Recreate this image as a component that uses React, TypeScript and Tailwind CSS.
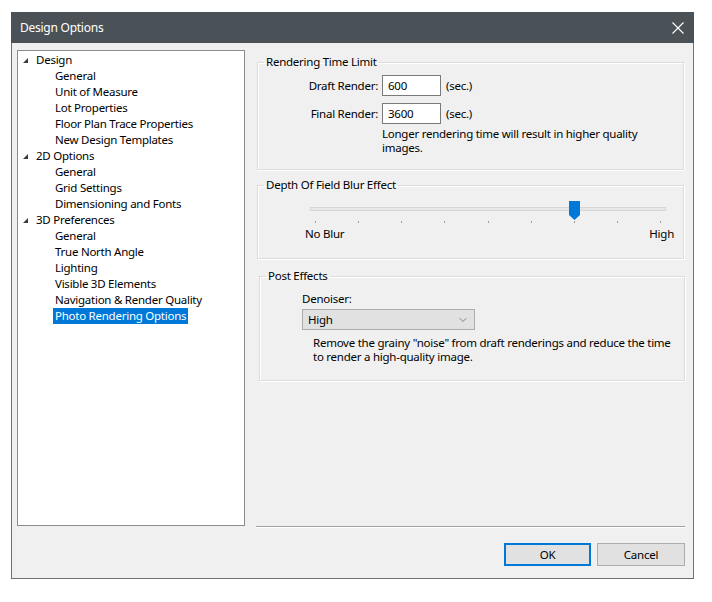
import { ChevronDown } from "lucide-react"

const tree = [
  {
    label: "Design",
    children: ["General", "Unit of Measure", "Lot Properties", "Floor Plan Trace Properties", "New Design Templates"],
  },
  { label: "2D Options", children: ["General", "Grid Settings", "Dimensioning and Fonts"] },
  {
    label: "3D Preferences",
    children: [
      "General",
      "True North Angle",
      "Lighting",
      "Visible 3D Elements",
      "Navigation & Render Quality",
      "Photo Rendering Options",
    ],
  },
]

const selected = "Photo Rendering Options"

function Expander() {
  return (
    <svg width="5" height="5" viewBox="0 0 5 5" className="block">
      <polygon points="5,0 5,5 0,5" fill="#3c3c3c" />
    </svg>
  )
}

function GroupBox({ title, className, children }: { title: string; className: string; children: React.ReactNode }) {
  return (
    <fieldset className={`border border-[#dcdcdc] shadow-[inset_1px_1px_0_#fff,1px_1px_0_#fff] ${className}`}>
      <legend className="ml-[6px] px-[2px] leading-4">{title}</legend>
      {children}
    </fieldset>
  )
}

export default function App() {
  const ticks = Array.from({ length: 9 })

  return (
    <div className="h-[602px] w-[712px] overflow-hidden bg-white pl-[11px] pt-[12px] font-['Noto_Sans',sans-serif] text-[11.5px] tracking-[-0.25px] text-black">
      <div className="w-[683px]">
        {/* Title bar */}
        <div className="flex h-[31px] items-center justify-between bg-[#4a5257] pl-[9px] pr-[10px]">
          <span className="text-[12px] text-white">Design Options</span>
          <svg width="12" height="12" viewBox="0 0 12 12">
            <path d="M0.5 0.5 L11.5 11.5 M11.5 0.5 L0.5 11.5" stroke="#fff" strokeWidth="1.1" />
          </svg>
        </div>

        {/* Body */}
        <div className="border-x border-b border-[#707070] bg-[#f0f0f0] pb-[12px] pl-[5px] pr-[7px] pt-[7px]">
          <div className="flex h-[478px]">
            {/* Tree */}
            <div className="h-[476px] w-[228px] border border-[#8c8c8c] bg-white pt-[1px]">
              {tree.map((node) => (
                <div key={node.label}>
                  <div className="flex h-4 items-center">
                    <span className="flex w-[18px] pl-[5px] pt-[1px]">
                      <Expander />
                    </span>
                    <span>{node.label}</span>
                  </div>
                  {node.children.map((child) => (
                    <div key={child} className="flex h-4 items-center pl-[35px]">
                      <span
                        className={`px-[2px] leading-4 ${child === selected ? "bg-[#0078d7] text-white" : ""}`}
                      >
                        {child}
                      </span>
                    </div>
                  ))}
                </div>
              ))}
            </div>

            {/* Options */}
            <div className="ml-[11px] flex w-[429px] flex-col">
              <GroupBox title="Rendering Time Limit" className="ml-[1px] mt-[4px] w-[427px] pb-[14px]">
                <div className="mt-[5px] flex items-center">
                  <span className="w-[124px] pr-[4px] text-right">Draft Render:</span>
                  <input
                    readOnly
                    value="600"
                    className="h-[21px] w-[59px] border border-[#7a7a7a] bg-white pl-[5px] outline-none"
                  />
                  <span className="ml-[5px]">(sec.)</span>
                </div>
                <div className="mt-[7px] flex items-center">
                  <span className="w-[124px] pr-[4px] text-right">Final Render:</span>
                  <input
                    readOnly
                    value="3600"
                    className="h-[21px] w-[59px] border border-[#7a7a7a] bg-white pl-[5px] outline-none"
                  />
                  <span className="ml-[5px]">(sec.)</span>
                </div>
                <p className="mt-[3px] whitespace-nowrap pl-[124px] leading-[14px]">
                  Longer rendering time will result in higher quality
                  <br />
                  images.
                </p>
              </GroupBox>

              <GroupBox title="Depth Of Field Blur Effect" className="ml-[1px] mt-[7px] w-[427px] pb-[16px]">
                {/* Slider */}
                <div className="relative ml-[52px] mt-[8px] h-[19px] w-[356px] pt-[6px]">
                  <div className="h-[4px] border border-[#d6d6d6] bg-[#e7e7e7]" />
                  <svg width="11" height="19" viewBox="0 0 11 19" className="absolute left-[259px] top-0">
                    <path d="M0 0 H11 V14 L5.5 19 L0 14 Z" fill="#0078d7" />
                  </svg>
                </div>
                <div className="ml-[52px] mt-[1px] flex h-[2px] w-[356px] justify-between px-[5px]">
                  {ticks.map((_, i) => (
                    <span key={i} className="h-[2px] w-px bg-[#a0a0a0]" />
                  ))}
                </div>
                <div className="ml-[47px] mt-[3px] flex w-[369px] justify-between leading-4">
                  <span>No Blur</span>
                  <span>High</span>
                </div>
              </GroupBox>

              <GroupBox title="Post Effects" className="ml-[3px] mt-[9px] w-[426px] pb-[16px]">
                <div className="mt-[7px] pl-[42px] leading-4">Denoiser:</div>
                <div className="ml-[42px] mt-[2px] flex h-[21px] w-[173px] items-center justify-between border border-[#adadad] bg-[#e1e1e1] pl-[5px] pr-[5px]">
                  <span>High</span>
                  <ChevronDown size={12} strokeWidth={1.2} color="#444" />
                </div>
                <p className="mt-[6px] whitespace-nowrap pl-[53px] leading-[14px]">
                  Remove the grainy "noise" from draft renderings and reduce the time
                  <br />
                  to render a high-quality image.
                </p>
              </GroupBox>

              <div className="mt-auto h-[2px] border-t border-b border-t-[#a0a0a0] border-b-white" />
            </div>
          </div>

          {/* Buttons */}
          <div className="mt-[15px] flex justify-end gap-[6px] pr-[1px]">
            <button className="h-[23px] w-[87px] border-2 border-[#0078d7] bg-[#e1e1e1]">OK</button>
            <button className="h-[23px] w-[88px] border border-[#adadad] bg-[#e1e1e1]">Cancel</button>
          </div>
        </div>
      </div>
    </div>
  )
}
